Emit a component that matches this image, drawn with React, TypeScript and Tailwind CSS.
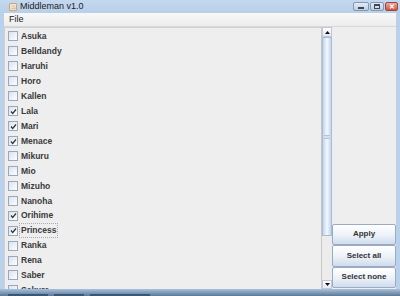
import React from 'react';

const names: [string, boolean][] = [
  ['Asuka', false],
  ['Belldandy', false],
  ['Haruhi', false],
  ['Horo', false],
  ['Kallen', false],
  ['Lala', true],
  ['Mari', true],
  ['Menace', true],
  ['Mikuru', false],
  ['Mio', false],
  ['Mizuho', false],
  ['Nanoha', false],
  ['Orihime', true],
  ['Princess', true],
  ['Ranka', false],
  ['Rena', false],
  ['Saber', false],
  ['Sakura', false],
];

const Check = ({ on }: { on: boolean }) => (
  <div className="w-[10px] h-[10px] border border-[#97a8c0] bg-gradient-to-br from-[#d9e2ed] to-white flex items-center justify-center">
    {on && (
      <svg width="7" height="7" viewBox="0 0 7 7">
        <path d="M1 3.5 L2.7 5.5 L6 1.5" stroke="#333" strokeWidth="1.2" fill="none" />
      </svg>
    )}
  </div>
);

const Btn = ({ label }: { label: string }) => (
  <div className="h-[21.5px] border border-[#9aabc3] rounded-[2px] bg-gradient-to-b from-white via-[#eef3f9] to-[#cfdcec] flex items-center justify-center text-[8px] font-bold text-[#333]">
    {label}
  </div>
);

export default function App() {
  return (
    <div className="w-[400px] h-[296px] bg-[#b9d1ea] flex flex-col overflow-hidden" style={{ fontFamily: '"Liberation Sans", Arial, sans-serif' }}>
      {/* title bar */}
      <div className="h-[13px] flex items-center bg-gradient-to-b from-[#c4d9ef] to-[#b8cfe8] relative">
        <div className="ml-[9px] w-[8px] h-[8px] rounded-[1px] bg-[#f2e4cc] border border-[#c9a776] flex items-center justify-center text-[6px] text-[#c0602a] leading-none">♨</div>
        <span className="ml-[3px] text-[9px] text-[#222] leading-none">Middleman v1.0</span>
        <div className="absolute right-[2px] top-[2px] flex gap-[1px]">
          <div className="w-[16px] h-[9px] border border-[#8496b0] rounded-[2px] bg-gradient-to-b from-[#e3ecf6] to-[#bccde3] flex items-center justify-center">
            <div className="w-[6px] h-[2px] bg-[#445] mt-[3px]" />
          </div>
          <div className="w-[14px] h-[9px] border border-[#8496b0] rounded-[2px] bg-gradient-to-b from-[#e3ecf6] to-[#bccde3] flex items-center justify-center">
            <div className="w-[6px] h-[5px] border border-[#445] border-t-2" />
          </div>
          <div className="w-[13px] h-[9px] border border-[#9a4a40] rounded-[2px] bg-gradient-to-b from-[#eaa89c] to-[#cf5444] flex items-center justify-center text-white text-[7px] font-bold leading-none">
            ✕
          </div>
        </div>
      </div>
      <div className="flex-1 flex flex-col mx-[4px] bg-[#efefef] min-h-0">
        {/* menu bar */}
        <div className="h-[14px] bg-gradient-to-b from-[#f8f8f8] to-[#ededed] border-b border-[#d8d8d8] flex items-center">
          <span className="ml-[5px] text-[9px] text-[#222]">File</span>
        </div>
        <div className="flex-1 flex min-h-0">
          {/* list */}
          <div className="w-[317px] bg-[#eeeeee] border-t border-l border-[#d0d0d0] overflow-hidden pt-[1px]">
            {names.map(([n, on]) => (
              <div key={n} className="h-[14.94px] flex items-center pl-[3px]">
                <Check on={on} />
                <span
                  className={`ml-[1px] text-[8.5px] font-bold text-[#3a3a3a] leading-none px-[1px] py-[2px] ${
                    n === 'Princess' ? 'border border-dotted border-[#aaa]' : 'border border-transparent'
                  }`}
                >
                  {n}
                </span>
              </div>
            ))}
          </div>
          {/* scrollbar */}
          <div className="w-[11px] flex flex-col border-l border-[#c8c8c8] bg-[#eeeeee]">
            <div className="h-[10px] border border-[#c0c8d4] bg-gradient-to-b from-white to-[#e4e9f0] flex items-center justify-center">
              <svg width="5" height="3" viewBox="0 0 5 3"><path d="M0 3 L2.5 0 L5 3Z" fill="#111" /></svg>
            </div>
            <div className="h-[199px] border border-[#a8bcd8] bg-gradient-to-r from-[#c3d6ee] via-[#f4f8fd] to-[#c3d6ee] flex items-center justify-center">
              <div className="w-[6px] h-[4px] bg-[#d7e0ea] border-t border-b border-[#b8c4d2]" />
            </div>
            <div className="flex-1 bg-[#ececec]" />
            <div className="h-[9px] border border-[#c0c8d4] bg-gradient-to-b from-white to-[#e4e9f0] flex items-center justify-center">
              <svg width="5" height="3" viewBox="0 0 5 3"><path d="M0 0 L2.5 3 L5 0Z" fill="#111" /></svg>
            </div>
          </div>
          {/* right panel */}
          <div className="flex-1 flex flex-col justify-end bg-[#eeeeee] pb-[1px]">
            <Btn label="Apply" />
            <Btn label="Select all" />
            <Btn label="Select none" />
          </div>
        </div>
      </div>
      {/* bottom frame */}
      <div className="h-[7px] bg-gradient-to-b from-[#a9c2de] to-[#5a7896] flex items-end gap-[6px] px-[8px]">
        <div className="w-[40px] h-[2px] bg-[#3b5670]" />
        <div className="w-[30px] h-[2px] bg-[#3b5670]" />
        <div className="w-[60px] h-[2px] bg-[#3b5670]" />
      </div>
    </div>
  );
}
